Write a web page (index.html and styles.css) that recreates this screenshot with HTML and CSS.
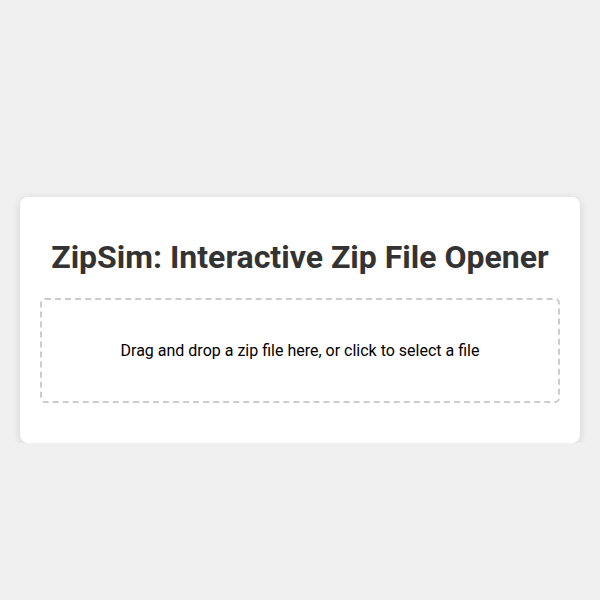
FILE: index.html
```html
<!DOCTYPE html>
<html>
<head>
<meta charset="utf-8">
<link rel="stylesheet" href="styles.css">
</head>
<body>
<div class="card">
  <h1 class="title">ZipSim: Interactive Zip File Opener</h1>
  <div class="dropzone">Drag and drop a zip file here, or click to select a file</div>
</div>
</body>
</html>
```
FILE: styles.css
```css
html, body {
  margin: 0;
  padding: 0;
  background: #f0f0f0;
  font-family: Roboto, "Liberation Sans", sans-serif;
  color: #333;
}
body {
  padding: 197px 20px 0;
}
.card {
  background: #fff;
  border-radius: 8px;
  box-shadow: 0 2px 10px rgba(0, 0, 0, 0.12);
  padding: 20px 20px 40px;
}
.title {
  margin: 21px 0 22px;
  font-size: 32px;
  font-weight: 700;
  line-height: 38px;
  text-align: center;
  color: #333;
}
.dropzone {
  border: 2px dashed #ccc;
  border-radius: 5px;
  padding: 40px 20px;
  text-align: center;
  font-size: 16px;
  line-height: 21px;
  color: #000;
}
```
